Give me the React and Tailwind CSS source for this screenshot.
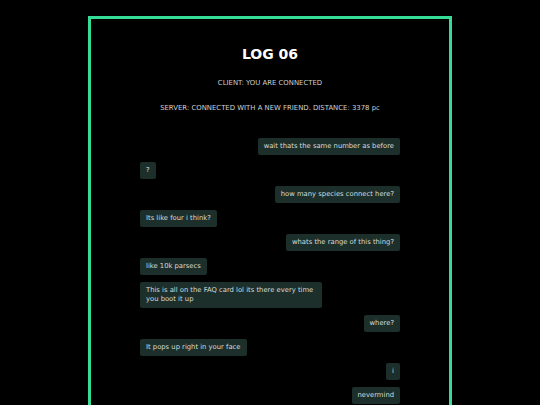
import React from 'react';

const messages = [
	{ from: 'me', text: 'wait thats the same number as before' },
	{ from: 'them', text: '?' },
	{ from: 'me', text: 'how many species connect here?' },
	{ from: 'them', text: 'Its like four i think?' },
	{ from: 'me', text: 'whats the range of this thing?' },
	{ from: 'them', text: 'like 10k parsecs' },
	{ from: 'them', text: 'This is all on the FAQ card lol its there every time you boot it up' },
	{ from: 'me', text: 'where?' },
	{ from: 'them', text: 'It pops up right in your face' },
	{ from: 'me', text: 'i' },
	{ from: 'me', text: 'nevermind' },
];

export default function App() {
	return (
		<div className="min-h-[405px] bg-black pt-4 font-['DejaVu_Sans',sans-serif]">
			<div className="mx-auto w-[364px] min-h-[420px] border-[3px] border-[#34dc95] pt-[25px]">
				<h1 className="text-center text-[14px] font-bold leading-[20px] text-white">LOG 06</h1>
				<p className="mt-[14px] text-center text-[6.9px] leading-[10px] text-[#cfcfcf]">CLIENT: YOU ARE CONNECTED</p>
				<p className="mt-[15px] text-center text-[6.9px] leading-[10px] text-[#cfcfcf]">
					SERVER: CONNECTED WITH A NEW FRIEND. DISTANCE: 3378 pc
				</p>

				{/* mensagens */}
				<div className="mx-auto mt-[25px] flex w-[260px] flex-col gap-[7px]">
					{messages.map((m, i) => (
						<div key={i} className={`flex ${m.from === 'me' ? 'justify-end' : 'justify-start'}`}>
							<div className="max-w-[182px] rounded-[2px] bg-[#1d2f2b] px-[6px] py-[4px] text-[6.8px] leading-[9px] text-[#d6dcd9]">
								{m.text}
							</div>
						</div>
					))}
				</div>
			</div>
		</div>
	);
}
